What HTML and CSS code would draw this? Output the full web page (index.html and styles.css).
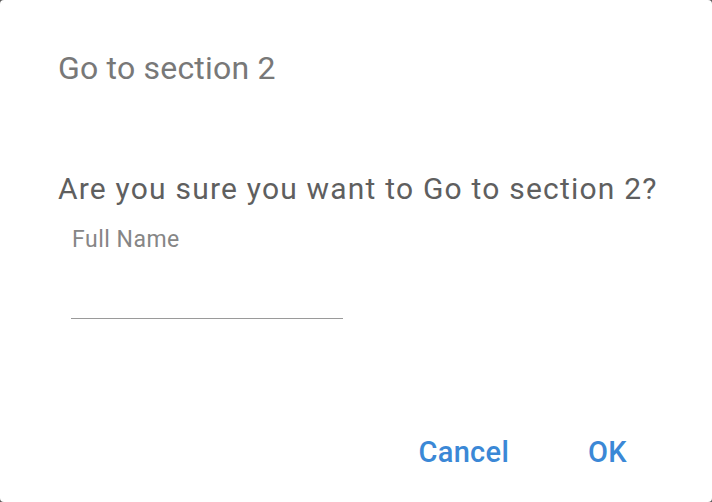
FILE: index.html
```html
<!DOCTYPE html>
<html lang="en">
<head>
<meta charset="utf-8">
<title>Go to section 2</title>
<link rel="stylesheet" href="styles.css">
</head>
<body>
<div class="dialog">
  <h2 class="title">Go to section 2</h2>
  <p class="message">Are you sure you want to Go to section 2?</p>
  <div class="field">
    <label class="label" for="fullname">Full Name</label>
    <input class="input" id="fullname" type="text">
  </div>
  <div class="actions">
    <button class="btn" type="button">Cancel</button>
    <button class="btn" type="button">OK</button>
  </div>
</div>
</body>
</html>
```

FILE: styles.css
```css
html, body {
  margin: 0;
  padding: 0;
  background: #5a5a5a;
}
body {
  width: 712px;
  height: 502px;
  overflow: hidden;
  font-family: Roboto, "Noto Sans", "Liberation Sans", sans-serif;
}
.dialog {
  box-sizing: border-box;
  width: 712px;
  height: 502px;
  background: #ffffff;
  border-radius: 4px;
  padding: 48px 0 0 58px;
  display: flex;
  flex-direction: column;
}
.title {
  margin: 0;
  font-size: 32px;
  line-height: 40px;
  font-weight: 400;
  letter-spacing: 0.2px;
  color: #787878;
}
.message {
  margin: 83px 0 0 0;
  font-size: 30px;
  line-height: 36px;
  letter-spacing: 1.2px;
  color: #5f5f5f;
}
.field {
  display: flex;
  flex-direction: column;
  margin: 19px 0 0 13px;
  width: 273px;
}
.label {
  font-size: 23px;
  line-height: 28px;
  letter-spacing: 0.5px;
  color: #868686;
  padding-left: 1px;
}
.input {
  box-sizing: border-box;
  width: 272px;
  height: 65px;
  border: none;
  border-bottom: 1px solid #9a9a9a;
  background: transparent;
  outline: none;
  padding: 0;
  font: inherit;
}
.actions {
  display: flex;
  justify-content: flex-end;
  gap: 79px;
  margin-top: auto;
  padding: 0 85px 32px 0;
}
.btn {
  border: none;
  background: transparent;
  padding: 0;
  font-family: inherit;
  font-size: 29px;
  line-height: 36px;
  font-weight: 500;
  letter-spacing: 0.3px;
  color: #3b88d6;
  cursor: pointer;
}
```
